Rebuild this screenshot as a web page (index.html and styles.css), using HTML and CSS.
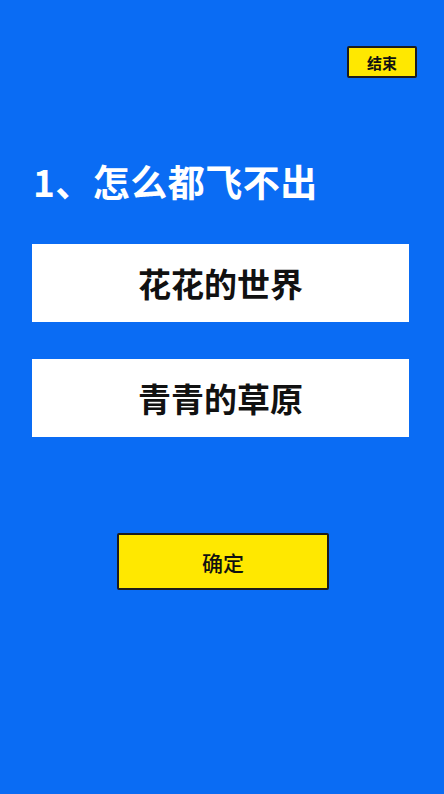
FILE: index.html
```html
<!DOCTYPE html>
<html lang="zh-CN">
<head>
<meta charset="utf-8">
<title>答题</title>
<link rel="stylesheet" href="styles.css">
</head>
<body>
<div class="page">
  <div class="topbar">
    <button class="end-btn">结束</button>
  </div>
  <h1 class="question">1、怎么都飞不出</h1>
  <div class="options">
    <div class="option">花花的世界</div>
    <div class="option">青青的草原</div>
  </div>
  <div class="actions">
    <button class="confirm-btn">确定</button>
  </div>
</div>
</body>
</html>
```
FILE: styles.css
```css
html, body {
  margin: 0;
  padding: 0;
}
body {
  background: #0a6cf4;
  font-family: "Noto Sans CJK SC", "Noto Sans", sans-serif;
}
.page {
  width: 444px;
  height: 794px;
  display: flex;
  flex-direction: column;
}
.topbar {
  display: flex;
  justify-content: flex-end;
  padding: 46px 27px 0 0;
}
.end-btn {
  width: 70px;
  height: 32px;
  box-sizing: border-box;
  background: #ffe800;
  border: 2px solid #1c1c1c;
  border-radius: 2px;
  font-family: "Noto Sans CJK SC", sans-serif;
  font-size: 15px;
  font-weight: 700;
  color: #111;
  padding: 0;
  display: flex;
  align-items: center;
  justify-content: center;
}
.question {
  margin: 81px 0 0 33px;
  font-size: 37px;
  line-height: 44px;
  font-weight: 700;
  color: #ffffff;
  letter-spacing: 0.5px;
}
.options {
  display: flex;
  flex-direction: column;
  gap: 37px;
  margin: 41px 35px 0 32px;
}
.option {
  height: 78px;
  background: #ffffff;
  display: flex;
  align-items: center;
  justify-content: center;
  font-size: 33px;
  font-weight: 700;
  color: #111;
}
.actions {
  display: flex;
  padding-left: 117px;
  margin-top: 96px;
}
.confirm-btn {
  width: 212px;
  height: 57px;
  box-sizing: border-box;
  background: #ffe800;
  border: 2px solid #1c1c1c;
  border-radius: 2px;
  font-family: "Noto Sans CJK SC", sans-serif;
  font-size: 21px;
  font-weight: 500;
  color: #111;
  padding: 0;
  display: flex;
  align-items: center;
  justify-content: center;
}
```
